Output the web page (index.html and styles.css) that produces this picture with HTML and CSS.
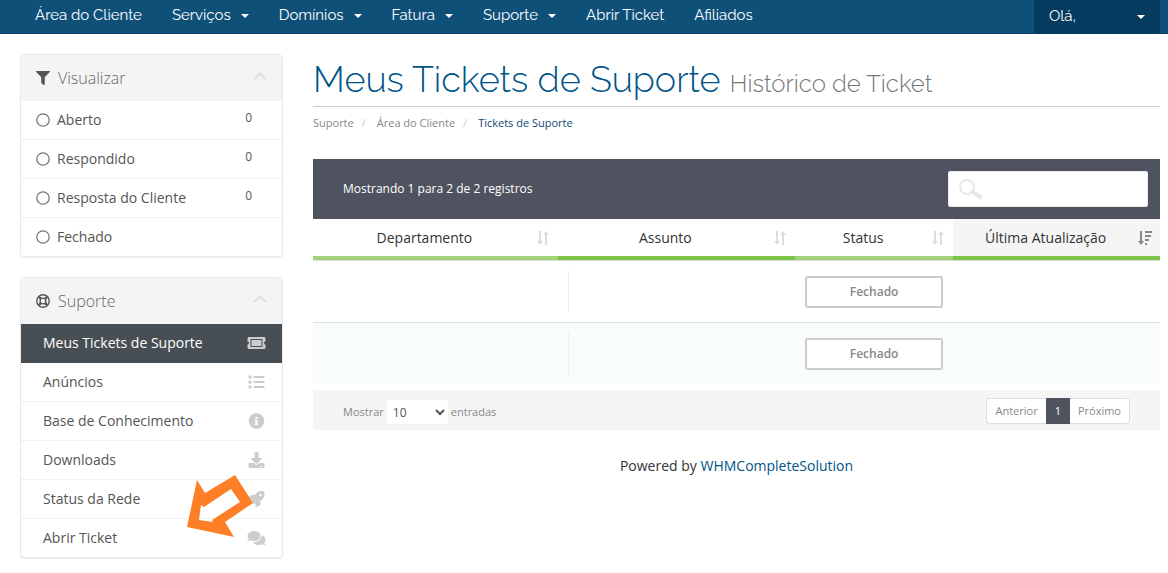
FILE: index.html
```html
<!DOCTYPE html>
<html lang="pt-BR">
<head>
<meta charset="utf-8">
<meta name="viewport" content="width=device-width, initial-scale=1">
<title>Meus Tickets de Suporte</title>
<link rel="stylesheet" href="styles.css">
</head>
<body>
<nav class="navbar">
  <ul class="nav-list">
    <li><a class="nav-link" href="#">Área do Cliente</a></li>
    <li><a class="nav-link" href="#">Serviços<span class="caret"></span></a></li>
    <li><a class="nav-link" href="#">Domínios<span class="caret"></span></a></li>
    <li><a class="nav-link" href="#">Fatura<span class="caret"></span></a></li>
    <li><a class="nav-link" href="#">Suporte<span class="caret"></span></a></li>
    <li><a class="nav-link" href="#">Abrir Ticket</a></li>
    <li><a class="nav-link" href="#">Afiliados</a></li>
  </ul>
  <a class="nav-link nav-user" href="#">Olá,<span class="caret"></span></a>
</nav>

<div class="layout">
  <aside class="sidebar">
    <section class="panel">
      <h2 class="panel-title">
        <svg class="title-icon" viewBox="0 0 512 512"><path d="M487.976 0H24.028C2.71 0-8.047 25.866 7.058 40.971L192 225.941V432c0 7.831 3.821 15.17 10.237 19.662l80 55.98C298.02 518.69 320 507.493 320 487.98V225.941l184.947-184.97C520.021 25.896 509.338 0 487.976 0z"/></svg>
        Visualizar
        <svg class="chevron" viewBox="0 0 14 10"><path d="M1.500 8L7 2.500L12.500 8"/></svg>
      </h2>
      <ul class="menu">
        <li><a class="menu-item filter-item" href="#"><svg class="ring" viewBox="0 0 14 14"><circle cx="7" cy="7" r="6.200"/></svg>Aberto<span class="count">0</span></a></li>
        <li><a class="menu-item filter-item" href="#"><svg class="ring" viewBox="0 0 14 14"><circle cx="7" cy="7" r="6.200"/></svg>Respondido<span class="count">0</span></a></li>
        <li><a class="menu-item filter-item" href="#"><svg class="ring" viewBox="0 0 14 14"><circle cx="7" cy="7" r="6.200"/></svg>Resposta do Cliente<span class="count">0</span></a></li>
        <li><a class="menu-item filter-item" href="#"><svg class="ring" viewBox="0 0 14 14"><circle cx="7" cy="7" r="6.200"/></svg>Fechado</a></li>
      </ul>
    </section>

    <section class="panel">
      <h2 class="panel-title">
        <svg class="title-icon life-ring" viewBox="0 0 14 14"><circle cx="7" cy="7" r="6.200"/><circle cx="7" cy="7" r="2.900"/><path d="M4.900 4.900L3 3M9.100 4.900L11 3M4.900 9.100L3 11M9.100 9.100L11 11"/></svg>
        Suporte
        <svg class="chevron" viewBox="0 0 14 10"><path d="M1.500 8L7 2.500L12.500 8"/></svg>
      </h2>
      <ul class="menu">
        <li><a class="menu-item active" href="#">Meus Tickets de Suporte
          <svg class="item-icon" viewBox="0 0 576 512"><path d="M128 160h320v192H128V160zm400 96c0 26.510 21.490 48 48 48v96c0 26.510-21.490 48-48 48H48c-26.510 0-48-21.490-48-48v-96c26.510 0 48-21.490 48-48s-21.490-48-48-48v-96c0-26.510 21.490-48 48-48h480c26.510 0 48 21.490 48 48v96c-26.510 0-48 21.490-48 48zm-48-104c0-13.255-10.745-24-24-24H120c-13.255 0-24 10.745-24 24v208c0 13.255 10.745 24 24 24h336c13.255 0 24-10.745 24-24V152z"/></svg></a></li>
        <li><a class="menu-item" href="#">Anúncios
          <svg class="item-icon" viewBox="0 0 18 16"><circle cx="2.500" cy="3" r="1.700"/><circle cx="2.500" cy="8" r="1.700"/><circle cx="2.500" cy="13" r="1.700"/><path d="M6 2h11v2H6zM6 7h11v2H6zM6 12h11v2H6z"/></svg></a></li>
        <li><a class="menu-item" href="#">Base de Conhecimento
          <svg class="item-icon" viewBox="0 0 512 512"><path d="M256 8C119.043 8 8 119.083 8 256c0 136.997 111.043 248 248 248s248-111.003 248-248C504 119.083 392.957 8 256 8zm0 110c23.196 0 42 18.804 42 42s-18.804 42-42 42-42-18.804-42-42 18.804-42 42-42zm56 254c0 6.627-5.373 12-12 12h-88c-6.627 0-12-5.373-12-12v-24c0-6.627 5.373-12 12-12h12v-64h-12c-6.627 0-12-5.373-12-12v-24c0-6.627 5.373-12 12-12h64c6.627 0 12 5.373 12 12v100h12c6.627 0 12 5.373 12 12v24z"/></svg></a></li>
        <li><a class="menu-item" href="#">Downloads
          <svg class="item-icon" viewBox="0 0 512 512"><path d="M216 0h80c13.300 0 24 10.700 24 24v168h87.700c17.800 0 26.700 21.500 14.100 34.100L269.700 378.300c-7.500 7.500-19.800 7.500-27.300 0L90.100 226.100c-12.600-12.600-3.700-34.100 14.100-34.100H192V24c0-13.300 10.700-24 24-24zm296 376v112c0 13.300-10.700 24-24 24H24c-13.300 0-24-10.700-24-24V376c0-13.300 10.700-24 24-24h146.700l49 49c20.100 20.100 52.500 20.100 72.600 0l49-49H488c13.300 0 24 10.700 24 24zm-124 88c0-11-9-20-20-20s-20 9-20 20 9 20 20 20 20-9 20-20zm64 0c0-11-9-20-20-20s-20 9-20 20 9 20 20 20 20-9 20-20z"/></svg></a></li>
        <li><a class="menu-item" href="#">Status da Rede
          <svg class="item-icon" viewBox="0 0 512 512"><path d="M505.120 19.094c-1.189-5.531-6.658-11-12.207-12.188C460.716 0 435.507 0 410.407 0 307.175 0 245.269 55.203 199.052 128H94.838c-16.348.016-35.557 11.875-42.887 26.484L2.516 253.297A28.400 28.400 0 0 0 0 264a24.009 24.009 0 0 0 24.006 24h103.810l-22.474 22.469c-11.366 11.361-12.997 32.258 0 45.250l50.904 50.906c11.156 11.188 32.156 13.156 45.277 0l22.475-22.469V488a24.009 24.009 0 0 0 24.006 24 28.559 28.559 0 0 0 10.707-2.516l98.728-49.390c14.629-7.297 26.508-26.500 26.508-42.860V312.797c72.598-46.313 128.035-108.406 128.035-211.094C512.075 76.500 512.075 51.297 505.120 19.094zM384.040 168A40 40 0 1 1 424.050 128a40.023 40.023 0 0 1-40.010 40z"/></svg></a></li>
        <li><a class="menu-item" href="#">Abrir Ticket
          <svg class="item-icon" viewBox="0 0 576 512"><path d="M416 192c0-88.400-93.100-160-208-160S0 103.600 0 192c0 34.300 14.100 65.900 38 92-13.400 30.200-35.500 54.200-35.800 54.500-2.200 2.300-2.800 5.700-1.500 8.700S4.800 352 8 352c36.600 0 66.900-12.300 88.700-25 32.200 15.700 70.300 25 111.300 25 114.900 0 208-71.600 208-160zm122 220c23.900-26 38-57.700 38-92 0-66.900-53.500-124.200-129.300-148.100.9 6.600 1.300 13.300 1.300 20.100 0 105.900-107.700 192-240 192-10.800 0-21.300-.8-31.700-1.900C207.800 439.600 281.800 480 368 480c41 0 79.100-9.200 111.300-25 21.800 12.700 52.100 25 88.700 25 3.200 0 6.100-1.900 7.300-4.800 1.300-2.900.7-6.300-1.500-8.700-.3-.3-22.400-24.200-35.800-54.500z"/></svg></a></li>
      </ul>
      <svg class="pointer" viewBox="0 0 66 62"><path fill-rule="evenodd" d="M0 52L10 5L18 18L48 0L66 28L38 47L47 62ZM12 45L26 47L25 45L53 27L44 14L17 32L14 30Z"/></svg>
    </section>
  </aside>

  <main class="content">
    <h1 class="page-title">Meus Tickets de Suporte <small class="subtitle">Histórico de Ticket</small></h1>
    <ol class="breadcrumb">
      <li><a href="#">Suporte</a></li>
      <li><a href="#">Área do Cliente</a></li>
      <li class="current">Tickets de Suporte</li>
    </ol>

    <div class="table-bar">
      <span>Mostrando 1 para 2 de 2 registros</span>
      <label class="search">
        <svg class="search-icon" viewBox="0 0 26 22"><circle cx="9" cy="9" r="7"/><path d="M15 14l7 5"/></svg>
        <input class="search-input" type="text" aria-label="Pesquisar">
      </label>
    </div>

    <table class="tickets">
      <thead>
        <tr>
          <th class="col-department"><div class="head"><span class="head-text">Departamento</span><svg class="sort" viewBox="0 0 14 14"><path d="M3 0h2v10h2L4 14L1 10h2zM9 14h2V4h2L10 0L7 4h2z"/></svg></div></th>
          <th class="col-subject"><div class="head"><span class="head-text">Assunto</span><svg class="sort" viewBox="0 0 14 14"><path d="M3 0h2v10h2L4 14L1 10h2zM9 14h2V4h2L10 0L7 4h2z"/></svg></div></th>
          <th class="col-status"><div class="head"><span class="head-text">Status</span><svg class="sort" viewBox="0 0 14 14"><path d="M3 0h2v10h2L4 14L1 10h2zM9 14h2V4h2L10 0L7 4h2z"/></svg></div></th>
          <th class="col-updated"><div class="head"><span class="head-text">Última Atualização</span><svg class="sort" viewBox="0 0 14 14"><path d="M2 0h2v10h2L3 14L0 10h2zM7 0h7v2H7zM7 4h6v2H7zM7 8h4v2H7zM7 12h2v2H7z"/></svg></div></th>
        </tr>
      </thead>
      <tbody>
        <tr><td></td><td><div class="subject"></div></td><td><button class="status" type="button">Fechado</button></td><td></td></tr>
        <tr><td></td><td><div class="subject"></div></td><td><button class="status" type="button">Fechado</button></td><td></td></tr>
      </tbody>
    </table>

    <div class="table-footer">
      <label class="length">Mostrar
        <select class="length-select"><option>10</option><option>25</option><option>50</option></select>
        entradas</label>
      <div class="pagination">
        <a class="page" href="#">Anterior</a><a class="page page-current" href="#">1</a><a class="page" href="#">Próximo</a>
      </div>
    </div>

    <p class="powered">Powered by <a href="#">WHMCompleteSolution</a></p>
  </main>
</div>
</body>
</html>
```
FILE: styles.css
```css
* { box-sizing: border-box; }
body {
  margin: 0;
  background: #fff;
  color: #333;
  font: 14px/20px "Open Sans", "Noto Sans", sans-serif;
}
a { color: inherit; text-decoration: none; }
ul, ol { margin: 0; padding: 0; list-style: none; }

.navbar {
  display: flex;
  justify-content: space-between;
  padding: 0 8px 0 20px;
  background: #0f5079;
  border-bottom: 1px solid #0a4067;
}
.nav-list { display: flex; }
.nav-link {
  display: flex;
  align-items: center;
  padding: 5px 15px 8px;
  color: #fff;
  font-family: Raleway, Lato, sans-serif;
  font-size: 15px;
}
.caret {
  margin: 2px 0 0 10px;
  border: 4px solid transparent;
  border-top-color: #fff;
  border-bottom: 0;
}
.nav-user {
  justify-content: space-between;
  min-width: 126px;
  margin-bottom: -1px;
  background: #053b5e;
}

.layout {
  display: grid;
  grid-template-columns: 263px minmax(0, 1fr);
  gap: 30px;
  padding: 20px 8px 14px 20px;
}
.sidebar { display: flex; flex-direction: column; gap: 20px; }
.panel {
  position: relative;
  border: 1px solid #e9e9e9;
  border-radius: 4px;
  box-shadow: 0 1px 1px #eee;
}
.panel-title {
  display: flex;
  align-items: center;
  gap: 8px;
  margin: 0;
  padding: 13px 15px;
  background: #f4f4f4;
  color: #666;
  font-size: 16px;
  font-weight: 300;
}
.title-icon { width: 14px; height: 14px; fill: #555; }
.life-ring { fill: none; stroke: #555; stroke-width: 1.400; }
.life-ring path { stroke-width: 2.400; }
.chevron {
  width: 14px;
  height: 10px;
  margin: 0 0 4px auto;
  fill: none;
  stroke: #ddd;
  stroke-width: 2;
}
.menu-item {
  display: flex;
  align-items: center;
  justify-content: space-between;
  padding: 9px 16px 9px 22px;
  border-bottom: 1px solid #f0f0f0;
  color: #555;
}
.menu li:last-child .menu-item { border-bottom: 0; }
.filter-item { justify-content: flex-start; padding: 9px 30px 9px 15px; }
.ring {
  width: 14px;
  height: 14px;
  margin-right: 7px;
  fill: none;
  stroke: #777;
  stroke-width: 1.300;
}
.count { margin: -4px 0 0 auto; font-size: 12px; }
.menu .active { background: #484f54; border-color: #484f54; color: #fff; }
.item-icon { width: 19px; height: 16px; fill: #ccc; }
.pointer {
  position: absolute;
  right: 29px;
  bottom: 20px;
  width: 66px;
  height: 62px;
  fill: #ff7f27;
}

.page-title {
  margin: 0;
  padding: 4px 0 1px;
  border-bottom: 1px solid #ccc;
  color: #058;
  font: 300 36px/43px Raleway, Lato, sans-serif;
}
.subtitle { color: #777; font-size: 24px; }
.breadcrumb {
  display: flex;
  padding: 6px 0 26px;
  color: #888;
  font-size: 11px;
}
.breadcrumb li + li::before { content: "/"; padding: 0 11px 0 8px; color: #ccc; }
.breadcrumb .current { color: #0f4a73; }

.table-bar {
  display: flex;
  align-items: center;
  justify-content: space-between;
  padding: 12px 12px 12px 30px;
  background: #4f535f;
  color: #fff;
  font-size: 12px;
}
.search { position: relative; }
.search-input {
  display: block;
  width: 200px;
  height: 36px;
  padding: 0 12px 0 40px;
  border: 1px solid #ececec;
  border-radius: 2px;
  background: #fff;
  font: inherit;
}
.search-icon {
  position: absolute;
  left: 10px;
  top: 7px;
  width: 26px;
  height: 22px;
  fill: none;
  stroke: #e6e8e9;
  stroke-width: 2;
  stroke-linecap: round;
}
.search-icon path { stroke-width: 4; }

.tickets {
  width: 100%;
  border-collapse: separate;
  border-spacing: 0;
  table-layout: fixed;
}
.tickets th {
  padding: 0;
  border-bottom: 4px solid #7cc443;
  font-weight: 400;
}
.tickets .col-department { width: 28.9%; border-color: #a3d47c; }
.tickets .col-subject { width: 28%; }
.tickets .col-status { width: 18.7%; border-color: #a3d47c; }
.tickets .col-updated { width: 24.4%; background: #f5f5f5; }
.head {
  display: flex;
  align-items: center;
  padding: 9px 8px 8px 0;
}
.head-text { flex: 1; text-align: center; }
.sort { width: 14px; height: 14px; fill: #ddd; }
.col-updated .sort { fill: #888; }
.tickets td {
  height: 62px;
  padding: 10px;
  border-top: 1px solid #ddd;
}
.tickets tbody tr:nth-child(even) { background: #f8fcfd; }
.subject { height: 41px; border-left: 1px solid #eee; }
.status {
  display: block;
  width: 100%;
  height: 32px;
  border: 2px solid #ccc;
  border-radius: 3px;
  background: #fff;
  color: #888;
  font: 600 12px "Open Sans", sans-serif;
}

.table-footer {
  display: flex;
  align-items: flex-start;
  justify-content: space-between;
  margin-top: 6px;
  padding: 8px 30px 6px;
  background: #f5f5f5;
  color: #888;
  font-size: 11px;
}
.length { display: flex; align-items: center; gap: 3px; padding-top: 2px; }
.length-select {
  width: 61px;
  height: 24px;
  padding: 0 0 0 2px;
  border: 0;
  border-radius: 3px;
  background: #fff;
  color: #555;
  font: 12px "Open Sans", sans-serif;
}
.pagination { display: flex; }
.page {
  padding: 2px 8px;
  border: 1px solid #ddd;
  background: #fff;
}
.page:first-child { border-right: 0; border-radius: 4px 0 0 4px; }
.page:last-child { border-left: 0; border-radius: 0 4px 4px 0; }
.page-current { border-color: #4f535f; background: #4f535f; color: #fff; }

.powered { margin: 26px 0 0; text-align: center; }
.powered a { color: #058; }
```
